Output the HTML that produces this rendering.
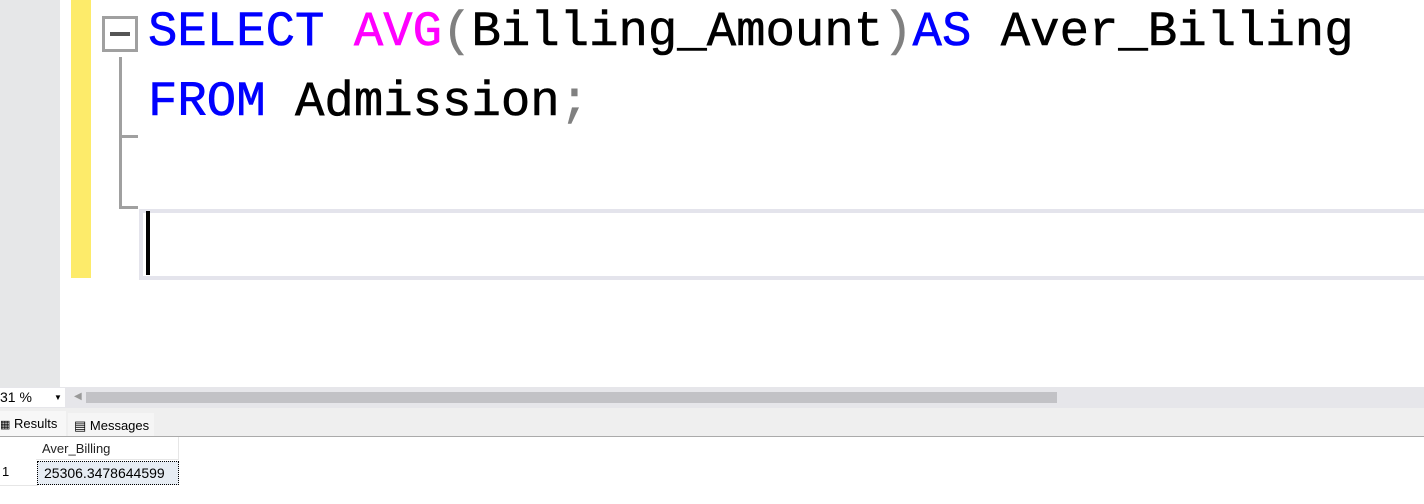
<!DOCTYPE html>
<html><head><style>
body{margin:0;width:1424px;height:504px;background:#fff;position:relative;overflow:hidden;font-family:"Liberation Sans",sans-serif}
.a{position:absolute}
.code{position:absolute;left:148px;font-family:"Liberation Mono",monospace;font-size:49px;white-space:pre;line-height:70px;-webkit-text-stroke:0.6px currentColor}
.k{color:#0000ff}.f{color:#ff00ff}.g{color:#808080}
</style></head><body>
<div class="a" style="left:0;top:0;width:60px;height:387px;background:#e6e7e8"></div>
<div class="a" style="left:71px;top:0;width:20px;height:278px;background:#fdeb6a"></div>
<div class="a" style="left:102px;top:16px;width:30px;height:30px;border:3px solid #a0a0a0;background:#fff"></div>
<div class="a" style="left:110px;top:32px;width:20px;height:4px;background:#555"></div>
<div class="a" style="left:119px;top:57px;width:3px;height:152px;background:#a0a0a0"></div>
<div class="a" style="left:119px;top:135px;width:19px;height:3px;background:#a0a0a0"></div>
<div class="a" style="left:119px;top:206px;width:19px;height:3px;background:#a0a0a0"></div>
<div class="a" style="left:139px;top:209px;width:1285px;height:63px;border-top:4px solid #e4e4ec;border-bottom:4px solid #e4e4ec;border-left:4px solid #e4e4ec;box-sizing:content-box"></div>
<div class="a" style="left:146px;top:211px;width:4px;height:64px;background:#000"></div>
<div class="code" style="top:-3px"><span class="k">SELECT</span> <span class="f">AVG</span><span class="g">(</span>Billing_Amount<span class="g">)</span><span class="k">AS</span> Aver_Billing</div>
<div class="code" style="top:67px"><span class="k">FROM</span> Admission<span class="g">;</span></div>
<div class="a" style="left:0;top:387px;width:1424px;height:21px;background:#e6e6ea"></div>
<div class="a" style="left:0;top:388px;width:65px;height:19px;background:#fff;font-size:14px;line-height:19px">31 %<span style="position:absolute;left:54px;font-size:8px">▼</span></div>
<div class="a" style="left:74px;top:391px;font-size:10px;color:#999">◀</div>
<div class="a" style="left:86px;top:392px;width:971px;height:11px;background:#c2c2c6"></div>
<div class="a" style="left:0;top:408px;width:1424px;height:28px;background:#efefef;border-bottom:1px solid #aaa"></div>
<div class="a" style="left:0;top:411px;width:66px;height:25px;background:#f7f7f7;font-size:13px;line-height:25px"><span style="font-size:11px">▦</span> Results</div>
<div class="a" style="left:68px;top:413px;width:86px;height:23px;background:#f5f5f5;font-size:13px;line-height:25px;padding-left:6px;box-sizing:border-box">▤ Messages</div>
<div class="a" style="left:36px;top:437px;width:143px;height:23px;border-right:1px solid #e6e6e6;border-bottom:1px solid #e6e6e6;font-size:13px;line-height:24px;padding-left:6px;box-sizing:border-box;color:#222">Aver_Billing</div>
<div class="a" style="left:0;top:461px;width:36px;height:24px;font-size:13px;line-height:22px;padding-left:2px;border-bottom:1px solid #e6e6e6">1</div>
<div class="a" style="left:37px;top:461px;width:142px;height:24px;background:#e6ecf3;border:1px dotted #000;box-sizing:border-box;font-size:14px;line-height:22px;padding-left:6px">25306.3478644599</div>
</body></html>
